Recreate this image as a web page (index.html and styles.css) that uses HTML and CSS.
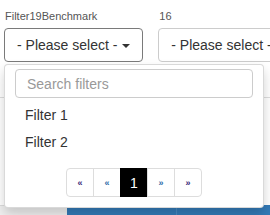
FILE: index.html
```html
<!DOCTYPE html>
<html lang="en">

<head>
    <meta charset="UTF-8">
    <meta name="viewport" content="width=device-width, initial-scale=1.0">
    <title>Filters</title>
    <link rel="stylesheet" href="styles.css">
</head>

<body>
    <div class="filter-row">
        <div class="filter-group">
            <div class="filter-label">Filter19Benchmark</div>
            <button class="select-btn active">- Please select - <span class="caret"></span></button>
        </div>
        <div class="filter-group">
            <div class="filter-label">16</div>
            <button class="select-btn">- Please select - <span class="caret"></span></button>
        </div>
    </div>

    <!-- table behind the open menu -->
    <div class="table">
        <div class="table-body"></div>
        <div class="table-head">
            <div class="cell cell-first"></div>
            <div class="cell cell-blue"></div>
            <div class="cell cell-blue"></div>
        </div>
    </div>

    <div class="dropdown-menu">
        <input class="search" type="text" placeholder="Search filters">
        <ul class="options">
            <li>Filter 1</li>
            <li>Filter 2</li>
        </ul>
        <div class="pager">
            <a class="page">&laquo;</a>
            <a class="page">&laquo;</a>
            <a class="page current">1</a>
            <a class="page">&raquo;</a>
            <a class="page">&raquo;</a>
        </div>
    </div>
</body>

</html>
```

FILE: styles.css
```css
* {
    margin: 0;
    padding: 0;
    box-sizing: border-box;
}

body {
    font-family: "Liberation Sans", Arial, sans-serif;
    color: #333;
    background: #fff;
    padding-top: 9px;
    position: relative;
    overflow: hidden;
}

.filter-row {
    display: flex;
    gap: 15px;
    padding-left: 4px;
}

.filter-label {
    font-size: 11px;
    line-height: 15px;
    color: #555;
    margin-bottom: 4px;
    padding-left: 1px;
    white-space: nowrap;
}

.select-btn {
    font-family: inherit;
    font-size: 14px;
    line-height: 20px;
    height: 34px;
    padding: 6px 12px;
    color: #333;
    background: #fff;
    border: 1px solid #ccc;
    border-radius: 4px;
    white-space: nowrap;
}

.select-btn.active {
    border-color: #7a7a7a;
}

.caret {
    display: inline-block;
    width: 0;
    height: 0;
    margin-left: 1px;
    vertical-align: middle;
    border-top: 4px solid #333;
    border-left: 4px solid transparent;
    border-right: 4px solid transparent;
}

.table {
    margin-top: 35px;
}

.table-body {
    height: 108px;
    border-top: 1px solid #ddd;
}

.table-head {
    display: flex;
    height: 12px;
}

.cell-first {
    width: 67px;
    background: #f0f0f0;
    border-top: 1px solid #ddd;
}

.cell-blue {
    background: #337ab7;
}

.cell-blue:nth-child(2) {
    width: 109px;
}

.cell-blue:nth-child(3) {
    flex: 1;
    border-left: 1px solid #4a8ac2;
}

/* open menu */
.dropdown-menu {
    position: absolute;
    top: 64px;
    left: 4px;
    width: 260px;
    padding: 4px 0 10px;
    background: #fff;
    border: 1px solid rgba(0, 0, 0, 0.15);
    border-radius: 4px;
    box-shadow: 0 6px 12px rgba(0, 0, 0, 0.175);
}

.search {
    display: block;
    width: 238px;
    height: 29px;
    margin: 0 10px 4px;
    padding: 0 11px;
    font-family: inherit;
    font-size: 14px;
    color: #555;
    border: 1px solid #ccc;
    border-radius: 4px;
}

.search::placeholder {
    color: #999;
}

.options {
    list-style: none;
}

.options li {
    font-size: 14px;
    line-height: 27px;
    padding-left: 20px;
    color: #333;
}

.pager {
    display: flex;
    justify-content: center;
    margin-top: 12px;
}

.page {
    width: 28px;
    height: 29px;
    display: flex;
    align-items: center;
    justify-content: center;
    font-size: 9px;
    font-weight: bold;
    color: #2f6aa8;
    border: 1px solid #ddd;
    margin-left: -1px;
}

.page:first-child {
    margin-left: 0;
    color: #3a2a7a;
    border-radius: 4px 0 0 4px;
}

.page:last-child {
    color: #3a2a7a;
    border-radius: 0 4px 4px 0;
}

.page.current {
    background: #000;
    border-color: #000;
    color: #fff;
    font-size: 14px;
    font-weight: normal;
}
```
